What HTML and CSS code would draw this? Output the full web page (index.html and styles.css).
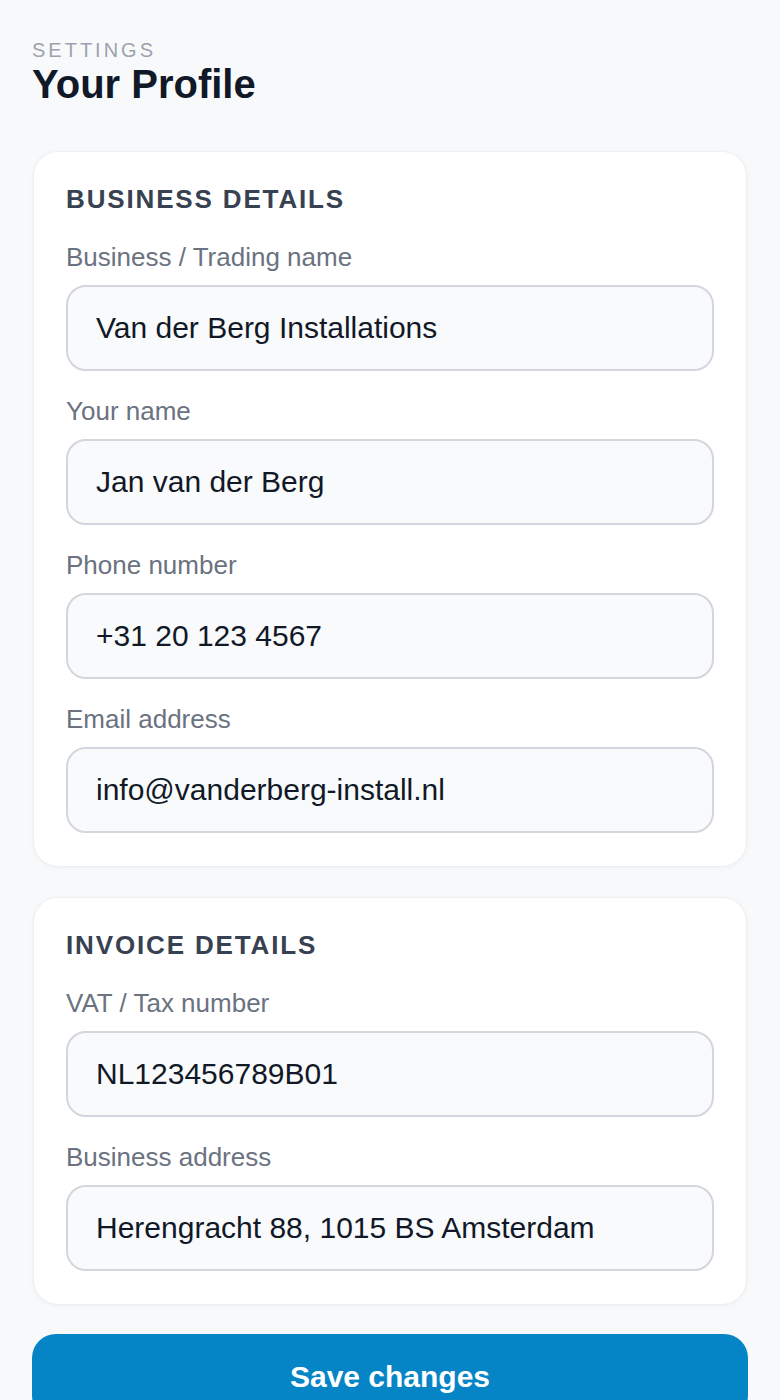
FILE: index.html
```html
<!DOCTYPE html>
<html lang="en">
<head>
<meta charset="utf-8">
<title>Your Profile</title>
<link rel="stylesheet" href="styles.css">
</head>
<body>
<main class="page">
  <header class="page-head">
    <div class="eyebrow">SETTINGS</div>
    <h1 class="title">Your Profile</h1>
  </header>

  <section class="card">
    <h2 class="card-title">BUSINESS DETAILS</h2>
    <div class="field">
      <label class="label" for="f1">Business / Trading name</label>
      <input class="input" id="f1" type="text" value="Van der Berg Installations">
    </div>
    <div class="field">
      <label class="label" for="f2">Your name</label>
      <input class="input" id="f2" type="text" value="Jan van der Berg">
    </div>
    <div class="field">
      <label class="label" for="f3">Phone number</label>
      <input class="input" id="f3" type="text" value="+31 20 123 4567">
    </div>
    <div class="field">
      <label class="label" for="f4">Email address</label>
      <input class="input" id="f4" type="text" value="info@vanderberg-install.nl">
    </div>
  </section>

  <section class="card">
    <h2 class="card-title">INVOICE DETAILS</h2>
    <div class="field">
      <label class="label" for="f5">VAT / Tax number</label>
      <input class="input" id="f5" type="text" value="NL123456789B01">
    </div>
    <div class="field">
      <label class="label" for="f6">Business address</label>
      <input class="input" id="f6" type="text" value="Herengracht 88, 1015 BS Amsterdam">
    </div>
  </section>

  <button class="save" type="button">Save changes</button>
</main>
</body>
</html>
```

FILE: styles.css
```css
* {
  box-sizing: border-box;
}

html, body {
  margin: 0;
  padding: 0;
  background: #f8f9fb;
}

body {
  font-family: "Liberation Sans", Arial, sans-serif;
  color: #111827;
}

.page {
  padding: 39px 32px 40px;
  display: flex;
  flex-direction: column;
}

.page-head {
  margin-bottom: 45px;
}

.eyebrow {
  font-size: 20px;
  line-height: 22px;
  letter-spacing: 3px;
  color: #9ca3af;
}

.title {
  margin: 0;
  font-size: 40px;
  line-height: 46px;
  font-weight: 700;
  color: #111827;
}

.card {
  background: #ffffff;
  margin: 0 2px 32px;
  border-radius: 24px;
  padding: 33px 32px;
  box-shadow: 0 0 0 1px rgba(16, 24, 40, 0.025), 0 1px 6px rgba(16, 24, 40, 0.05);
  display: flex;
  flex-direction: column;
  gap: 24px;
}

.card + .save {
  margin-top: -2px;
}

.card-title {
  margin: 0 0 4px;
  font-size: 26px;
  line-height: 28px;
  font-weight: 700;
  letter-spacing: 1.85px;
  color: #374151;
}

.field {
  display: flex;
  flex-direction: column;
  gap: 12px;
}

.label {
  font-size: 26px;
  line-height: 32px;
  color: #6b7280;
}

.input {
  display: block;
  width: 100%;
  height: 86px;
  margin: 0;
  padding: 0 28px;
  border: 2px solid #d4d6dd;
  border-radius: 20px;
  background: #f9fafb;
  font-family: "Liberation Sans", Arial, sans-serif;
  font-size: 30px;
  color: #111827;
  outline: none;
}

.save {
  display: block;
  width: 100%;
  height: 86px;
  border: 0;
  border-radius: 24px;
  background: #0584c6;
  color: #ffffff;
  font-family: "Liberation Sans", Arial, sans-serif;
  font-size: 30px;
  font-weight: 700;
  cursor: pointer;
}
```
